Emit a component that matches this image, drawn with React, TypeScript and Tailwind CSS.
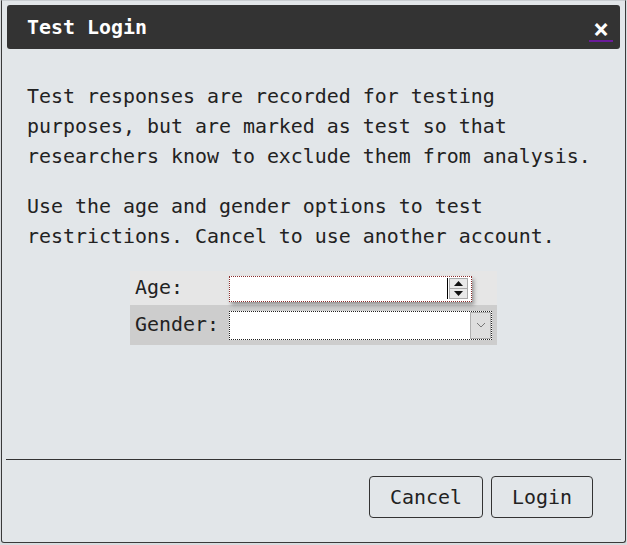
import React from 'react';

const mono = { fontFamily: '"DejaVu Sans Mono", "Liberation Mono", monospace' };

const AgeField: React.FC = () => (
  <div className="relative mt-[1px] w-[243px] h-[26px] bg-white border border-dotted border-[#8a2e2e] shadow-[2px_3px_4px_rgba(0,0,0,0.35)] flex items-center justify-end pr-[3px]">
    <div className="w-[1px] h-[21px] bg-black mr-[1px]" />
    <div className="flex flex-col w-[19px] h-[21px] border border-[#aaa] bg-[#e9e9e9]">
      <div className="flex-1 flex items-center justify-center border-b border-[#aaa]">
        <svg width="9" height="5" viewBox="0 0 9 5">
          <path d="M0 5 L4.5 0 L9 5 Z" fill="#111" />
        </svg>
      </div>
      <div className="flex-1 flex items-center justify-center">
        <svg width="9" height="5" viewBox="0 0 9 5">
          <path d="M0 0 L4.5 5 L9 0 Z" fill="#111" />
        </svg>
      </div>
    </div>
  </div>
);

const GenderField: React.FC = () => (
  <div className="w-[263px] h-[29px] bg-white border border-dotted border-[#222] flex justify-end p-0">
    <div className="w-[21px] h-full bg-[#dedede] border border-[#b0b0b0] flex items-center justify-center">
      <svg width="10" height="6" viewBox="0 0 10 6">
        <path d="M1 1 L5 5 L9 1" stroke="#777" strokeWidth="1" fill="none" />
      </svg>
    </div>
  </div>
);

export default function App() {
  return (
    <div className="w-[627px] h-[545px] bg-[#d9dcdf] pl-[1px]" style={mono}>
      <div className="w-[625px] h-[543px] bg-[#e2e6e9] border border-[#3a3a3a] border-t-[#c9cdd1] rounded-b-[3px] px-[5px] pt-[4px] flex flex-col text-[#222]">
        {/* Title bar */}
        <div className="h-[44px] bg-[#333333] rounded-[3px] flex items-center justify-between pl-[20px] pr-[7px]">
          <span className="pt-[2px] text-white font-bold text-[19.93px] leading-none">Test Login</span>
          <span className="mt-[6px] px-[4px] border-b-2 border-[#6a1b9a] text-white font-bold text-[26px] leading-[22px]">×</span>
        </div>

        {/* Body */}
        <div className="flex-1 px-[20px] pt-[33px] text-[19.93px] leading-[30px]">
          <p>
            Test responses are recorded for testing
            <br />
            purposes, but are marked as test so that
            <br />
            researchers know to exclude them from analysis.
          </p>
          <p className="mt-[20px]">
            Use the age and gender options to test
            <br />
            restrictions. Cancel to use another account.
          </p>

          <div className="mt-[19px] mx-auto w-[367px]">
            <div className="flex h-[34px] bg-[#e6e6e6] items-center">
              <div className="w-[99px] pl-[5px]">Age:</div>
              <AgeField />
            </div>
            <div className="flex h-[40px] bg-[#cdcdcd] items-center">
              <div className="w-[99px] pl-[5px]">Gender:</div>
              <GenderField />
            </div>
          </div>
        </div>

        {/* Footer */}
        <div className="-mx-[1px] border-t border-[#333] pt-[16px] pb-[24px] pr-[28px] flex justify-end gap-[8px]">
          <button className="h-[42px] px-[20px] pt-[1px] border border-[#333] rounded-[4px] text-[19.93px] text-[#222]">Cancel</button>
          <button className="h-[42px] px-[20px] pt-[1px] border border-[#333] rounded-[4px] text-[19.93px] text-[#222]">Login</button>
        </div>
      </div>
    </div>
  );
}
